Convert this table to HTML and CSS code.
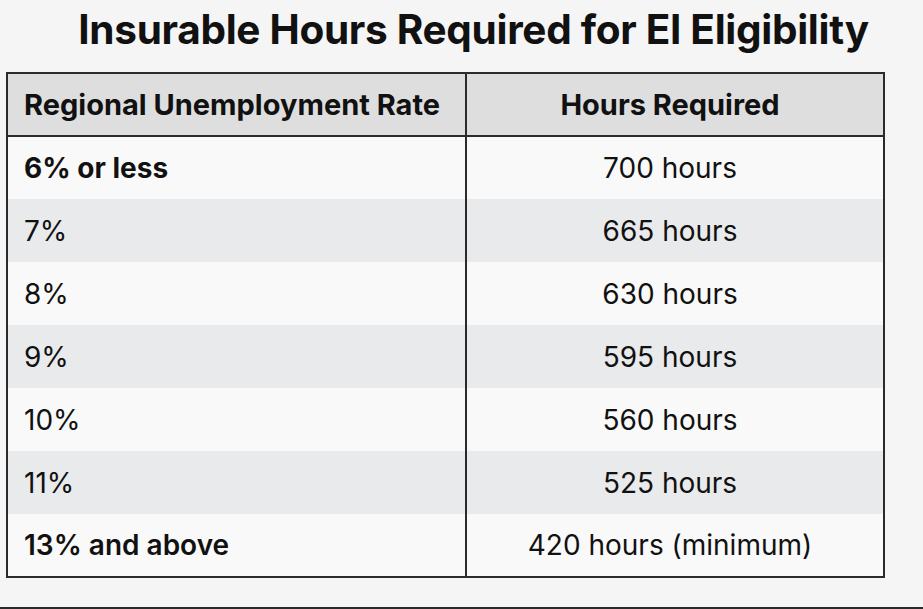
FILE: index.html
```html
<!DOCTYPE html>
<html lang="en">
<head>
<meta charset="utf-8">
<title>Insurable Hours Required for EI Eligibility</title>
<link rel="stylesheet" href="styles.css">
</head>
<body>
<div class="page">
  <h1 class="title">Insurable Hours Required for EI Eligibility</h1>
  <table class="ei-table">
    <thead>
      <tr><th class="col-rate">Regional Unemployment Rate</th><th class="col-hours">Hours Required</th></tr>
    </thead>
    <tbody>
      <tr class="odd"><td class="col-rate strong">6% or less</td><td class="col-hours">700 hours</td></tr>
      <tr class="even"><td class="col-rate">7%</td><td class="col-hours">665 hours</td></tr>
      <tr class="odd"><td class="col-rate">8%</td><td class="col-hours">630 hours</td></tr>
      <tr class="even"><td class="col-rate">9%</td><td class="col-hours">595 hours</td></tr>
      <tr class="odd"><td class="col-rate">10%</td><td class="col-hours">560 hours</td></tr>
      <tr class="even"><td class="col-rate">11%</td><td class="col-hours">525 hours</td></tr>
      <tr class="odd"><td class="col-rate medium">13% and above</td><td class="col-hours">420 hours (minimum)</td></tr>
    </tbody>
  </table>
  <div class="bottom-rule"></div>
</div>
</body>
</html>
```
FILE: styles.css
```css
* { box-sizing: border-box; }
html, body { margin: 0; padding: 0; }
body {
  background: #f5f5f5;
  font-family: Inter, "Noto Sans", sans-serif;
  color: #111;
}
.page {
  width: 923px;
  height: 609px;
  display: flex;
  flex-direction: column;
}
.title {
  margin: 0;
  height: 72px;
  padding-top: 6px;
  padding-left: 24px;
  text-align: center;
  font-size: 40.5px;
  font-weight: 700;
  line-height: 48px;
  letter-spacing: -0.3px;
  color: #111;
}
.ei-table {
  margin-left: 6px;
  width: 879px;
  border-collapse: collapse;
  border: 2px solid #2b2b2b;
  table-layout: fixed;
}
.ei-table th, .ei-table td {
  height: 63px;
  padding: 0 16px;
  font-size: 28px;
  font-weight: 400;
  vertical-align: middle;
}
.ei-table th {
  background: #dedede;
  font-size: 29px;
  font-weight: 700;
  border-bottom: 2px solid #2b2b2b;
}
.col-rate { width: 459px; text-align: left; border-right: 2px solid #2b2b2b; }
.ei-table .col-hours { text-align: center; padding-right: 26px; }
.odd td { background: #f9f9f9; }
.even td { background: #e9eaec; }
.ei-table td.strong { font-weight: 700; }
.ei-table td.medium { font-weight: 600; }
.bottom-rule {
  margin-top: auto;
  height: 2px;
  background: #2a2a2a;
}
```
